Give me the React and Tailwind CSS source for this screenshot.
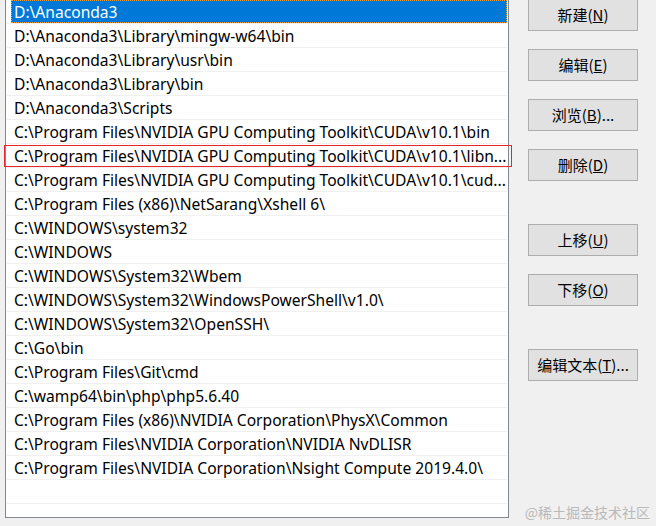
import React from "react";

const paths = [
  "D:\\Anaconda3",
  "D:\\Anaconda3\\Library\\mingw-w64\\bin",
  "D:\\Anaconda3\\Library\\usr\\bin",
  "D:\\Anaconda3\\Library\\bin",
  "D:\\Anaconda3\\Scripts",
  "C:\\Program Files\\NVIDIA GPU Computing Toolkit\\CUDA\\v10.1\\bin",
  "C:\\Program Files\\NVIDIA GPU Computing Toolkit\\CUDA\\v10.1\\libn...",
  "C:\\Program Files\\NVIDIA GPU Computing Toolkit\\CUDA\\v10.1\\cud...",
  "C:\\Program Files (x86)\\NetSarang\\Xshell 6\\",
  "C:\\WINDOWS\\system32",
  "C:\\WINDOWS",
  "C:\\WINDOWS\\System32\\Wbem",
  "C:\\WINDOWS\\System32\\WindowsPowerShell\\v1.0\\",
  "C:\\WINDOWS\\System32\\OpenSSH\\",
  "C:\\Go\\bin",
  "C:\\Program Files\\Git\\cmd",
  "C:\\wamp64\\bin\\php\\php5.6.40",
  "C:\\Program Files (x86)\\NVIDIA Corporation\\PhysX\\Common",
  "C:\\Program Files\\NVIDIA Corporation\\NVIDIA NvDLISR",
  "C:\\Program Files\\NVIDIA Corporation\\Nsight Compute 2019.4.0\\",
  "",
  "",
];

const buttons = [
  { label: "新建", key: "N", mt: "mt-[-1px]" },
  { label: "编辑", key: "E", mt: "mt-[18px]" },
  { label: "浏览", key: "B", dots: true, mt: "mt-[18px]" },
  { label: "删除", key: "D", mt: "mt-[18px]" },
  { label: "上移", key: "U", mt: "mt-[43px]" },
  { label: "下移", key: "O", mt: "mt-[18px]" },
  { label: "编辑文本", key: "T", dots: true, mt: "mt-[43px]" },
];

const PathRow = ({ text, index }) => {
  const selected = index === 0;
  return (
    <div className="relative h-[24px] border-b border-[#f0f0f0]">
      {selected ? (
        <div className="ml-[4px] h-[23px] bg-[#0078d7] outline-1 outline-dotted outline-[#f0a030] -outline-offset-1 pl-[3px] pt-[1px] text-white leading-[23px]">
          {text}
        </div>
      ) : (
        <div className="pl-[7px] pt-[1px] leading-[23px] text-black whitespace-nowrap">{text}</div>
      )}
      {index === 6 && (
        <div className="absolute left-[-3px] right-[-5px] top-[1px] h-[22px] border border-[#e8262a]"></div>
      )}
    </div>
  );
};

export default function App() {
  return (
    <div
      className="relative flex h-[526px] w-[656px] overflow-hidden bg-[#f0f0f0]"
      style={{ fontFamily: '"Noto Sans", "Noto Sans CJK SC", sans-serif' }}
    >
      <div className="ml-[5px] mt-[-1px] h-[519px] w-[504px] shrink-0 border border-[#828790] bg-white px-[1px] text-[15.6px]">
        {paths.map((p, i) => (
          <PathRow key={i} text={p} index={i} />
        ))}
      </div>

      <div className="ml-[19px] flex w-[110px] flex-col">
        {buttons.map((b) => (
          <button
            key={b.key}
            className={`${b.mt} h-[32px] w-[110px] border border-[#adadad] bg-[#e1e1e1] text-[15px] text-black`}
            style={{ fontFamily: '"Noto Sans CJK SC", "Noto Sans", sans-serif' }}
          >
            {b.label}(<span className="underline">{b.key}</span>){b.dots ? "..." : ""}
          </button>
        ))}
      </div>

      <div
        className="absolute bottom-[3px] right-[6px] text-[14px] text-[#b9b9b9]"
        style={{ fontFamily: '"Noto Sans CJK SC", sans-serif' }}
      >
        @稀土掘金技术社区
      </div>
    </div>
  );
}
